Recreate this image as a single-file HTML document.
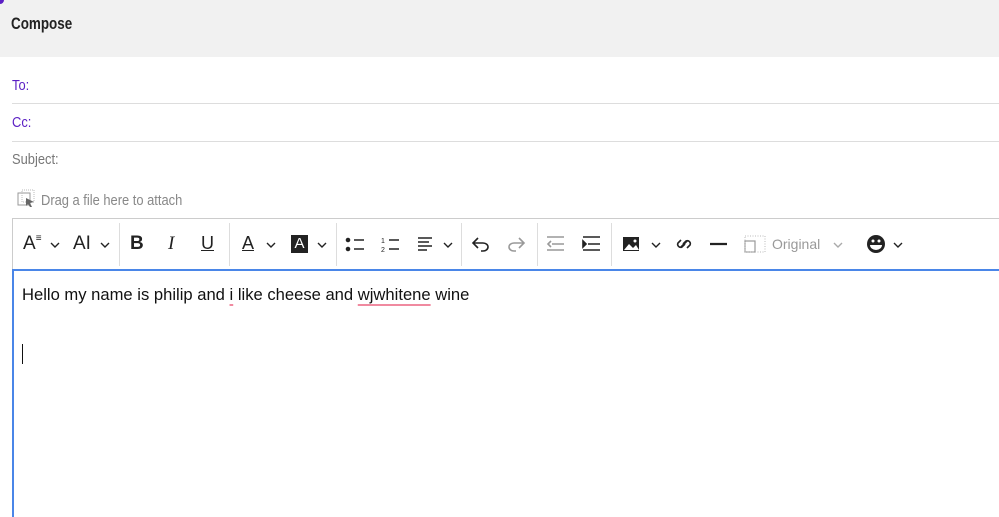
<!DOCTYPE html>
<html><head><style>
body{margin:0;width:999px;height:517px;overflow:hidden;background:#fff;font-family:"Liberation Sans",sans-serif;position:relative}
.a{position:absolute}
.hdr{left:0;top:0;width:999px;height:57px;background:#f1f1f1}
.lbl{font-size:15px;left:12px;transform-origin:0 0;transform:scaleX(0.86)}
.line{left:12px;width:987px;height:1px;background:#ddd}
.sep{top:223px;width:1px;height:43px;background:#ddd}
svg{position:absolute}
.ul{text-decoration:underline #f08aa0 2px;text-underline-offset:4px}
</style></head><body>
<div class="a hdr"></div>
<div class="a" style="left:0;top:0;width:4px;height:4px;background:#5b1fc4;border-bottom-right-radius:4px"></div>
<div class="a" style="left:11px;top:14px;font-size:17px;font-weight:bold;color:#222;transform-origin:0 0;transform:scaleX(0.79)">Compose</div>
<div class="a lbl" style="top:77px;color:#5b1fc4">To:</div>
<div class="a line" style="top:103px"></div>
<div class="a lbl" style="top:114px;color:#5b1fc4">Cc:</div>
<div class="a line" style="top:141px"></div>
<div class="a lbl" style="top:151px;color:#777">Subject:</div>
<svg style="left:17px;top:189px" width="20" height="20" viewBox="0 0 20 20"><rect x="1" y="4" width="12" height="12" fill="none" stroke="#999"/><rect x="5" y="1" width="12" height="12" fill="none" stroke="#bbb" stroke-dasharray="1 1"/><path d="M9 9 L17 13 L13 14 L15 18 L13 18 L11 15 L9 17Z" fill="#666"/></svg>
<div class="a lbl" style="left:41px;top:192px;color:#888">Drag a file here to attach</div>
<div class="a" style="left:12px;top:218px;width:987px;height:1px;background:#ccc"></div>
<div class="a" style="left:12px;top:218px;width:1px;height:52px;background:#ccc"></div>
<div class="a" style="left:12px;top:269px;width:987px;height:2px;background:#4a86e8"></div>
<div class="a" style="left:12px;top:270px;width:2px;height:247px;background:#4a86e8"></div>
<div class="a sep" style="left:119px"></div><div class="a sep" style="left:229px"></div><div class="a sep" style="left:336px"></div><div class="a sep" style="left:461px"></div><div class="a sep" style="left:537px"></div><div class="a sep" style="left:611px"></div>
<div class="a" style="left:23px;top:233px;font-size:19px;color:#222">A<span style="font-size:10px;vertical-align:top">≡</span></div>
<div class="a" style="left:73px;top:233px;font-size:19px;color:#222">AI</div>
<div class="a" style="left:130px;top:233px;font-size:19px;font-weight:bold;color:#222">B</div>
<div class="a" style="left:168px;top:233px;font-size:19px;font-style:italic;color:#222;font-family:'Liberation Serif',serif">I</div>
<div class="a" style="left:201px;top:233px;font-size:18px;text-decoration:underline;color:#222">U</div>
<div class="a" style="left:242px;top:233px;font-size:18px;text-decoration:underline;color:#222">A</div>
<div class="a" style="left:291px;top:235px;width:17px;height:18px;background:#222;color:#fff;font-size:15px;text-align:center;line-height:18px">A</div>
<div class="a" style="left:772px;top:236px;font-size:14px;color:#999">Original</div>
<svg style="left:0;top:219px" width="999" height="50" viewBox="0 219 999 50" fill="none" stroke="#222" stroke-width="1.6">
<g stroke-width="1.4"><path d="M51 243l4 4 4-4M101 243l4 4 4-4M267 243l4 4 4-4M318 243l4 4 4-4M444 243l4 4 4-4M652 243l4 4 4-4M894 243l4 4 4-4"/><path d="M834 243l4 4 4-4" stroke="#aaa"/></g>
<circle cx="348" cy="240" r="1.5" fill="#222"/><circle cx="348" cy="249" r="1.5" fill="#222"/><path d="M354 240h10M354 249h10"/>
<path d="M389 240h10M389 249h10"/><text x="381" y="243" font-size="7" fill="#222" stroke="none">1</text><text x="381" y="252" font-size="7" fill="#222" stroke="none">2</text>
<path d="M418 238h14M418 242h11M418 246h14M418 250h9"/>
<path d="M478 238l-5 5 5 5M473 243h10a5 4 0 0 1 0 8h-2"/>
<path d="M519 238l5 5-5 5M524 243h-10a5 4 0 0 0 0 8h2" stroke="#999"/>
<g stroke="#999"><path d="M547 237h17M552 244h12M547 250h17"/><path d="M551 241l-3 3 3 3"/></g>
<path d="M583 237h17M588 244h12M583 250h17"/><path d="M583 241l3 3-3 3z" fill="#222"/>
<rect x="623" y="237" width="16" height="14" fill="#222" stroke="none"/><path d="M624 250l5-6 4 4 3-3 3 5z" fill="#fff" stroke="none"/><circle cx="635" cy="241" r="1.5" fill="#fff" stroke="none"/>
<path d="M681 240l-3 3a3 3 0 0 0 4 4l3-3M687 248l3-3a3 3 0 0 0-4-4l-3 3M681 247l6-6"/>
<path d="M710 244h17" stroke-width="2.2"/>
<rect x="745" y="241" width="10" height="11" stroke="#999" stroke-width="1.2"/><rect x="745" y="236" width="20" height="16" stroke="#bbb" stroke-width="1" stroke-dasharray="1 1.5"/>
<circle cx="876" cy="244" r="9" fill="#222" stroke="none"/><circle cx="873" cy="241" r="1.5" fill="#fff" stroke="none"/><circle cx="879" cy="241" r="1.5" fill="#fff" stroke="none"/><path d="M870 245h12a6 5 0 0 1-12 0z" fill="#fff" stroke="none"/>
</svg>
<div class="a" style="left:22px;top:285px;font-size:16.6px;color:#111">Hello my name is philip and <span class="ul">i</span> like cheese and <span class="ul">wjwhitene</span> wine</div>
<div class="a" style="left:22px;top:344px;width:1px;height:20px;background:#111"></div>
</body></html>
